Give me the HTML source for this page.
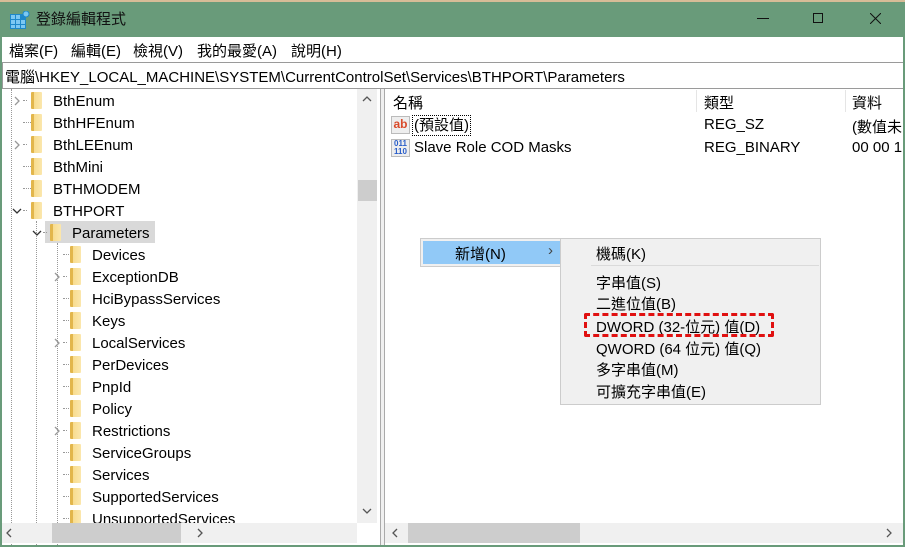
<!DOCTYPE html>
<html><head><meta charset="utf-8"><style>
*{margin:0;padding:0;box-sizing:border-box}
body{width:905px;height:547px;overflow:hidden;background:#699b7a;font-family:"Liberation Sans","Noto Sans CJK TC",sans-serif;font-size:15px;color:#000;position:relative}
.a{position:absolute;white-space:nowrap}
.f{position:absolute;width:11px;height:17px;background:linear-gradient(90deg,#e2b64c 0 3px,#f8dc8e 3px,#fbe7ad);border-radius:1px}
.row{position:absolute;height:22px;line-height:22px}
.dot{position:absolute;border-top:1px dotted #999;width:10px}
.vd{position:absolute;border-left:1px dotted #999}
</style></head><body>
<div class="a" style="left:0;top:0;width:905px;height:2px;background:#d7bc97"></div>
<svg class="a" style="left:10px;top:11px" width="20" height="18" viewBox="0 0 20 18"><rect x="0" y="3" width="16" height="15" fill="#1e88c9"/><g fill="#7cc8f2"><rect x="1" y="4" width="4" height="4"/><rect x="6" y="4" width="4" height="4"/><rect x="1" y="9" width="4" height="4"/><rect x="6" y="9" width="4" height="4"/><rect x="11" y="9" width="4" height="4"/><rect x="1" y="14" width="4" height="3"/><rect x="6" y="14" width="4" height="3"/><rect x="11" y="14" width="4" height="3"/></g><circle cx="16" cy="3" r="3" fill="#7cc8f2" stroke="#1e88c9"/></svg>
<div class="a" style="left:36px;top:8px;font-size:15px;color:#111">登錄編輯程式</div>
<div class="a" style="left:757px;top:18px;width:12px;height:1px;background:#111"></div>
<div class="a" style="left:813px;top:13px;width:10px;height:10px;border:1px solid #111"></div>
<svg class="a" style="left:870px;top:13px" width="11" height="11"><path d="M0 0L11 11M11 0L0 11" stroke="#111"/></svg>
<div class="a" style="left:2px;top:37px;width:901px;height:26px;background:#fff"></div>
<div class="a" style="left:9px;top:40px">檔案(F)</div>
<div class="a" style="left:71px;top:40px">編輯(E)</div>
<div class="a" style="left:133px;top:40px">檢視(V)</div>
<div class="a" style="left:197px;top:40px">我的最愛(A)</div>
<div class="a" style="left:291px;top:40px">說明(H)</div>
<div class="a" style="left:2px;top:62px;width:901px;height:27px;background:#fff;border:1px solid #9a9a9a;border-right:none"></div>
<div class="a" style="left:5px;top:66px">電腦\HKEY_LOCAL_MACHINE\SYSTEM\CurrentControlSet\Services\BTHPORT\Parameters</div>
<div class="a" style="left:2px;top:89px;width:378px;height:456px;background:#fff;overflow:hidden">
 <div class="vd" style="left:9px;top:0;height:456px"></div>
 <div class="vd" style="left:34px;top:132px;height:324px"></div>
 <div class="vd" style="left:55px;top:154px;height:302px"></div>
</div>
<div id="tree"></div>
<div class="a" style="left:357px;top:89px;width:20px;height:434px;background:#f0f0f0"></div>
<div class="a" style="left:358px;top:180px;width:19px;height:21px;background:#cdcdcd"></div>
<svg class="a" style="left:362px;top:96px" width="10" height="6"><path d="M1 5L5 1L9 5" stroke="#555" fill="none" stroke-width="1.3"/></svg>
<svg class="a" style="left:362px;top:508px" width="10" height="6"><path d="M1 1L5 5L9 1" stroke="#555" fill="none" stroke-width="1.3"/></svg>
<div class="a" style="left:377px;top:89px;width:3px;height:456px;background:#fff"></div>
<div class="a" style="left:380px;top:89px;width:5px;height:456px;background:#f0f0f0;border-left:1px solid #aaa;border-right:1px solid #aaa"></div>
<div class="a" style="left:385px;top:89px;width:518px;height:456px;background:#fff"></div>
<div class="a" style="left:696px;top:90px;width:1px;height:22px;background:#e5e5e5"></div>
<div class="a" style="left:845px;top:90px;width:1px;height:22px;background:#e5e5e5"></div>
<div class="a" style="left:393px;top:92px">名稱</div>
<div class="a" style="left:704px;top:92px">類型</div>
<div class="a" style="left:852px;top:92px">資料</div>
<div class="a" style="left:391px;top:116px;width:19px;height:18px;background:#eee;border:1px solid #bbb;color:#d94a2a;font-weight:bold;font-size:12px;line-height:14px;text-align:center">ab</div>
<div class="a" style="left:412px;top:115px;border:1px dotted #000;padding:0 1px;line-height:19px">(預設值)</div>
<div class="a" style="left:704px;top:116px">REG_SZ</div>
<div class="a" style="left:852px;top:116px">(數值未</div>
<div class="a" style="left:391px;top:139px;width:19px;height:18px;background:#eee;border:1px solid #bbb;color:#2a5ec9;font-weight:bold;font-size:8px;line-height:8px;text-align:center">011<br>110</div>
<div class="a" style="left:414px;top:139px">Slave Role COD Masks</div>
<div class="a" style="left:704px;top:139px">REG_BINARY</div>
<div class="a" style="left:852px;top:139px">00 00 1</div>
<div class="a" style="left:385px;top:523px;width:518px;height:20px;background:#f0f0f0"></div>
<div class="a" style="left:408px;top:523px;width:172px;height:20px;background:#cdcdcd"></div>
<svg class="a" style="left:392px;top:528px" width="6" height="10"><path d="M5 1L1 5L5 9" stroke="#555" fill="none" stroke-width="1.3"/></svg>
<svg class="a" style="left:886px;top:528px" width="6" height="10"><path d="M1 1L5 5L1 9" stroke="#555" fill="none" stroke-width="1.3"/></svg>
<div class="a" style="left:420px;top:238px;width:142px;height:29px;background:#f0f0f0;border:1px solid #ccc"></div>
<div class="a" style="left:423px;top:241px;width:138px;height:23px;background:#91c9f7"></div>
<div class="a" style="left:455px;top:243px">新增(N)</div>
<div class="a" style="left:548px;top:242px;color:#444">&#8250;</div>
<div class="a" style="left:560px;top:238px;width:261px;height:167px;background:#f0f0f0;border:1px solid #ccc"></div>
<div class="a" style="left:591px;top:265px;width:228px;height:1px;background:#dadada"></div>
<div class="a" style="left:596px;top:243px">機碼(K)</div>
<div class="a" style="left:596px;top:272px">字串值(S)</div>
<div class="a" style="left:596px;top:293px">二進位值(B)</div>
<div class="a" style="left:596px;top:316px">DWORD (32-位元) 值(D)</div>
<div class="a" style="left:596px;top:338px">QWORD (64 位元) 值(Q)</div>
<div class="a" style="left:596px;top:359px">多字串值(M)</div>
<div class="a" style="left:596px;top:381px">可擴充字串值(E)</div>
<div class="a" style="left:584px;top:313px;width:190px;height:24px;border:3px dashed #e01010;border-radius:2px"></div>
<script>
var t=document.getElementById('tree'),h='';
var items=[[1,'BthEnum','>'],[1,'BthHFEnum',''],[1,'BthLEEnum','>'],[1,'BthMini',''],[1,'BTHMODEM',''],[1,'BTHPORT','v'],[2,'Parameters','v'],[3,'Devices',''],[3,'ExceptionDB','>'],[3,'HciBypassServices',''],[3,'Keys',''],[3,'LocalServices','>'],[3,'PerDevices',''],[3,'PnpId',''],[3,'Policy',''],[3,'Restrictions','>'],[3,'ServiceGroups',''],[3,'Services',''],[3,'SupportedServices',''],[3,'UnsupportedServices','']];
var fx={1:31,2:50,3:70},tx={1:53,2:72,3:92},cx={1:13,2:33,3:53};
items.forEach(function(it,i){var y=89+22*i,l=it[0];
if(l==2)h+='<div class="a" style="left:45px;top:'+y+'px;width:110px;height:22px;background:#d9d9d9"></div>';
h+='<div class="dot" style="left:'+(cx[l]+10)+'px;top:'+(y+11)+'px;width:'+(it[2]?4:8)+'px"></div>';
if(it[2]=='>')h+='<svg class="a" style="left:'+(cx[l]+1)+'px;top:'+(y+7)+'px" width="6" height="10"><path d="M1 1L5 5L1 9" stroke="#999" fill="none" stroke-width="1.3"/></svg>';
if(it[2]=='v')h+='<svg class="a" style="left:'+(cx[l]-1)+'px;top:'+(y+9)+'px" width="10" height="6"><path d="M1 1L5 5L9 1" stroke="#333" fill="none" stroke-width="1.3"/></svg>';
h+='<div class="f" style="left:'+fx[l]+'px;top:'+(y+3)+'px"></div>';
h+='<div class="row a" style="left:'+tx[l]+'px;top:'+(y+2)+'px">'+it[1]+'</div>';});
t.innerHTML=h;
</script>
<div class="a" style="left:2px;top:523px;width:355px;height:20px;background:#f0f0f0"></div>
<div class="a" style="left:52px;top:523px;width:129px;height:20px;background:#cdcdcd"></div>
<svg class="a" style="left:6px;top:528px" width="6" height="10"><path d="M5 1L1 5L5 9" stroke="#555" fill="none" stroke-width="1.3"/></svg>
<svg class="a" style="left:197px;top:528px" width="6" height="10"><path d="M1 1L5 5L1 9" stroke="#555" fill="none" stroke-width="1.3"/></svg>
</body></html>
